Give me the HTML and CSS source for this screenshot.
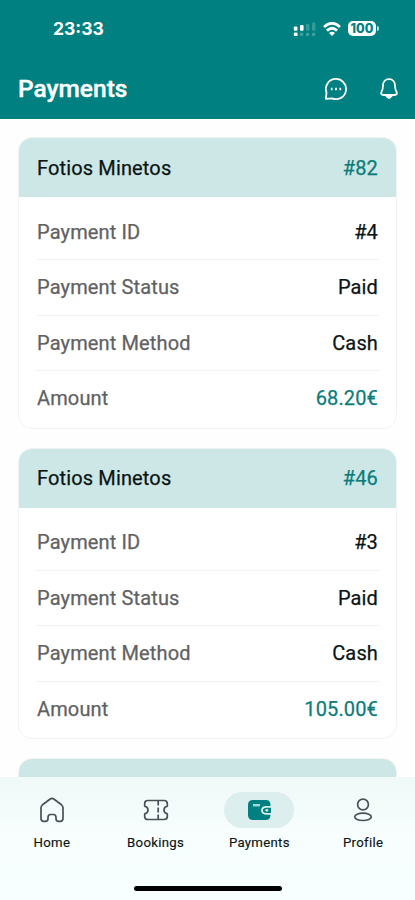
FILE: index.html
```html
<!DOCTYPE html>
<html lang="en">
<head>
<meta charset="utf-8">
<meta name="viewport" content="width=device-width, initial-scale=1">
<title>Payments</title>
<link rel="stylesheet" href="styles.css">
</head>
<body>
<div class="app">
  <header class="header">
    <div class="status">
      <span class="time">23:33</span>
      <div class="status-icons">
        <svg class="signal" width="24" height="16" viewBox="0 0 24 16" fill="#fff">
          <rect x="0.8" y="5.5" width="3.6" height="4.2" rx="1"/><rect x="7" y="4" width="3.6" height="5.7" rx="1"/>
          <g opacity=".2"><rect x="13" y="3" width="3.4" height="6.7" rx="1"/><rect x="19" y="1.4" width="3.4" height="8.3" rx="1"/></g>
          <rect x="0.8" y="11.5" width="3.8" height="3.6" rx="1.2"/>
          <g opacity=".25"><rect x="7" y="11.7" width="3.2" height="3.2" rx="1"/><rect x="13" y="11.7" width="3.2" height="3.2" rx="1"/><rect x="19" y="11.7" width="3.2" height="3.2" rx="1"/></g>
        </svg>
        <svg class="wifi" width="18" height="14" viewBox="0 0 18 14" fill="none" stroke="#fff" stroke-width="2.8">
          <path d="M1 5.1Q9-2.5 17 5.1"/><path d="M4 8.6Q9 4 14 8.6"/><path d="M9 14 6 11Q9 8.6 12 11Z" fill="#fff" stroke="none"/>
        </svg>
        <div class="battery"><span class="level">100</span><span class="nub"></span></div>
      </div>
    </div>
    <div class="titlebar">
      <h1>Payments</h1>
      <div class="actions">
        <svg width="24" height="24" viewBox="0 0 24 24" fill="none" stroke="#fff" stroke-width="1.8" stroke-linejoin="round">
          <path d="M1.900 21.900 2.500 15.500A10.100 10.100 0 1 1 8 21.300Z"/><path d="M7.700 10.700v2.600M12 10.700v2.600M16.300 10.700v2.600" stroke-width="1.700"/>
        </svg>
        <svg width="24" height="24" viewBox="0 0 24 24" fill="none" stroke="#fff" stroke-width="1.8" stroke-linejoin="round">
          <path d="M12 2.200c-3.900 0-6 2.800-6 6.400 0 3.200-.500 4.400-1.400 6-1.100 2-.300 3.400 1.900 3.400h11c2.200 0 3-1.400 1.900-3.400-.900-1.600-1.400-2.800-1.400-6 0-3.600-2.100-6.400-6-6.400Z"/><path d="M8.800 19Q12 24 15.200 19Z" fill="#fff" stroke-width=".8"/>
        </svg>
      </div>
    </div>
  </header>

  <main class="list">
    <section class="card">
      <div class="card-head"><span>Fotios Minetos</span><span class="accent">#82</span></div>
      <div class="rows">
        <div class="row"><span class="label">Payment ID</span><span>#4</span></div>
        <div class="row"><span class="label">Payment Status</span><span>Paid</span></div>
        <div class="row"><span class="label">Payment Method</span><span>Cash</span></div>
        <div class="row"><span class="label">Amount</span><span class="accent">68.20€</span></div>
      </div>
    </section>
    <section class="card">
      <div class="card-head"><span>Fotios Minetos</span><span class="accent">#46</span></div>
      <div class="rows">
        <div class="row"><span class="label">Payment ID</span><span>#3</span></div>
        <div class="row"><span class="label">Payment Status</span><span>Paid</span></div>
        <div class="row"><span class="label">Payment Method</span><span>Cash</span></div>
        <div class="row"><span class="label">Amount</span><span class="accent">105.00€</span></div>
      </div>
    </section>
    <section class="card"><div class="card-head"></div></section>
  </main>

  <footer class="footer">
    <nav class="nav">
      <a class="tab"><span class="pill">
        <svg width="26" height="26" viewBox="0 0 26 26" fill="none" stroke="#4a5058" stroke-width="1.7" stroke-linejoin="round"><path d="M11.200 2 3.500 7.800Q2 9 2 10.800V21.500Q2 24.300 4.800 24.300H6.500Q9 24.300 9 21.800V20.500Q9 17.500 11.500 17.500H14.500Q17 17.500 17 20.500V21.800Q17 24.300 19.500 24.300H21.200Q24 24.300 24 21.500V10.800Q24 9 22.500 7.800L14.800 2Q13 .7 11.200 2Z"/></svg>
      </span><span>Home</span></a>
      <a class="tab"><span class="pill">
        <svg width="26" height="26" viewBox="0 0 26 26" fill="none" stroke="#4a5058" stroke-width="1.7" stroke-linejoin="round"><path d="M5 3.500H21Q24.300 3.500 24.300 6.500V9.200Q21 10 21 13T24.300 16.800V19.500Q24.300 22.500 21 22.500H5Q1.700 22.500 1.700 19.500V16.800Q5 16 5 13T1.700 9.200V6.500Q1.700 3.500 5 3.500Z"/><path d="M15.200 3.500V8.500M15.200 10.500V15.500M15.200 17.500V22.500"/></svg>
      </span><span>Bookings</span></a>
      <a class="tab"><span class="pill active">
        <svg width="26" height="26" viewBox="0 0 26 26"><path fill="#008080" d="M7 3H20Q24.500 3 24.500 8V18Q24.500 23 19.500 23H7Q2 23 2 18V8Q2 3 7 3Z"/><path d="M7 8.200H14" stroke="#a5dad7" stroke-width="2.4"/><path d="M25 9.800H20.500Q16 9.800 16 13.300T20.500 16.800H25" fill="#008080" stroke="#d9efee" stroke-width="1.8"/><circle cx="20.800" cy="13.300" r="1.4" fill="#d9efee"/></svg>
      </span><span>Payments</span></a>
      <a class="tab"><span class="pill">
        <svg width="26" height="26" viewBox="0 0 26 26" fill="none" stroke="#4a5058" stroke-width="1.7"><circle cx="13" cy="7.500" r="5.400"/><ellipse cx="13" cy="19.800" rx="8.300" ry="3.700"/></svg>
      </span><span>Profile</span></a>
    </nav>
    <div class="home-indicator"></div>
  </footer>
</div>
</body>
</html>
```
FILE: styles.css
```css
* { box-sizing: border-box; }

body {
  margin: 0;
  background: #fefefe;
  color: #0c1414;
  font-family: Roboto, "Liberation Sans", sans-serif;
}

.app {
  height: 900px;
  display: flex;
  flex-direction: column;
  overflow: hidden;
}

.header {
  height: 118.5px;
  flex: none;
  background: #008080;
  color: #fff;
}

.status {
  height: 57px;
  padding: 0 36px 0 53px;
  display: flex;
  align-items: center;
  justify-content: space-between;
}

.time {
  font: 700 17.5px/1 Inter, sans-serif;
}

.status-icons { display: flex; align-items: center; }
.wifi { margin: 0 7px 0 6px; }
.battery { display: flex; align-items: center; }

.level {
  width: 28px;
  height: 15px;
  border-radius: 5px;
  background: #fff;
  color: #008080;
  font: 800 12.5px/15px Inter, sans-serif;
  text-align: center;
}

.nub {
  width: 2px;
  height: 5px;
  margin-left: 1px;
  border-radius: 0 2px 2px 0;
  background: #b8dede;
}

.titlebar {
  height: 63px;
  padding: 0 14px 0 18px;
  display: flex;
  align-items: center;
  justify-content: space-between;
}

h1 {
  margin: 0;
  font-size: 24.5px;
  line-height: 28px;
  font-weight: 500;
  -webkit-text-stroke: .4px currentColor;
}

.actions { display: flex; gap: 29px; }

.list {
  flex: 1;
  min-height: 0;
  overflow: hidden;
  padding: 18.5px 18px 0 18px;
  display: flex;
  flex-direction: column;
  gap: 19px;
}

.card {
  flex: none;
  height: 291.5px;
  border: 1px solid #f1f3f3;
  border-radius: 14px;
  overflow: hidden;
  background: #fff;
  font-size: 20px;
  font-weight: 400;
  letter-spacing: .14px;
  -webkit-text-stroke: .25px currentColor;
}

.card-head {
  height: 59px;
  padding: 0 18px;
  display: flex;
  align-items: center;
  justify-content: space-between;
  background: #cce7e5;
}

.rows { padding: 7.5px 17px 0; }

.row {
  height: 55.5px;
  padding: 0 1px;
  display: flex;
  align-items: center;
  justify-content: space-between;
  border-bottom: 1px solid #f2f2f2;
}

.row:last-child { height: 54.5px; border-bottom: 0; }
.label { color: #616161; }
.accent { color: #0b7c79; }

.footer {
  flex: none;
  height: 123px;
  background: linear-gradient(#eff9f8, #f7fefd 45%, #f8ffff);
}

.nav { height: 109px; padding-top: 15px; display: flex; }

.tab {
  flex: 1;
  display: flex;
  flex-direction: column;
  align-items: center;
  gap: 6px;
  font-size: 13.2px;
  line-height: 17px;
  font-weight: 400;
  letter-spacing: .3px;
  -webkit-text-stroke: .15px currentColor;
}

.pill {
  width: 70px;
  height: 36px;
  border-radius: 18px;
  display: flex;
  align-items: center;
  justify-content: center;
}

.active { background: #dceeed; }

.home-indicator {
  width: 148px;
  height: 5px;
  margin: 0 auto;
  border-radius: 3px;
  background: #000;
}
```
